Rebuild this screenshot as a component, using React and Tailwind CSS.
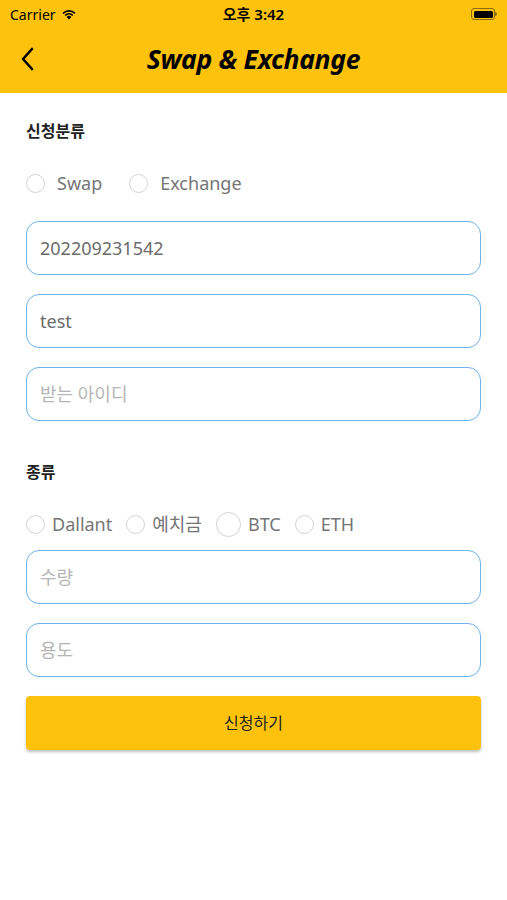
import React, { useState } from 'react'

const Radio = ({ label, checked, onClick, big, wide }) => (
  <button onClick={onClick} className={`flex items-center ${wide ? 'gap-[12px]' : 'gap-[7px]'}`}>
    <span className={`${big ? 'size-[25px]' : 'size-[19px]'} rounded-full border border-[#d4d4d4] bg-white flex items-center justify-center`}>
      {checked && <span className='size-[9px] rounded-full bg-[#fdc20c]' />}
    </span>
    <span className='text-[18px] text-[#757575]'>{label}</span>
  </button>
)

const Field = ({ value, placeholder }) => (
  <input
    defaultValue={value}
    placeholder={placeholder}
    className='w-full h-[54px] rounded-[13px] border-[1.5px] border-[#6db3ee] px-[13px] text-[18px] text-[#6b6b6b] placeholder:text-[#b5b5b5] outline-none'
  />
)

const App = () => {
  const [kind, setKind] = useState('')
  const [coin, setCoin] = useState('')

  return (
    <main className='w-[507px] h-[900px] bg-white' style={{ fontFamily: '"Noto Sans", "Noto Sans CJK KR", sans-serif' }}>
      <header className='bg-[#fdc20c] h-[93px]'>
        <div className='h-[28px] flex items-center justify-between px-[10px]'>
          <div className='flex items-center gap-[5px] w-[120px]'>
            <span className='text-[14px] text-black'>Carrier</span>
            <svg width='16' height='12' viewBox='0 0 16 12'>
              <path d='M8 11.5 L5.6 8.9 A3.4 3.4 0 0 1 10.4 8.9 Z' fill='black' />
              <path d='M3.6 6.9 A6.3 6.3 0 0 1 12.4 6.9 L11.3 8 A4.8 4.8 0 0 0 4.7 8 Z' fill='black' />
              <path d='M1.5 4.8 A9.2 9.2 0 0 1 14.5 4.8 L13.4 5.9 A7.7 7.7 0 0 0 2.6 5.9 Z' fill='black' />
            </svg>
          </div>
          <span className='text-[15px] font-semibold text-black'>오후 3:42</span>
          <div className='w-[120px] flex justify-end'>
            <div className='flex items-center'>
              <div className='w-[24px] h-[12px] rounded-[3px] border border-[#8a6d10] p-[1.5px]'>
                <div className='w-full h-full rounded-[1.5px] bg-black' />
              </div>
              <div className='w-[1.5px] h-[4px] bg-[#8a6d10] rounded-r' />
            </div>
          </div>
        </div>
        <div className='relative h-[65px] flex items-center justify-center'>
          <button className='absolute left-[18px] top-[18px]'>
            <svg width='18' height='26' viewBox='0 0 18 26' fill='none' stroke='black' strokeWidth='2.6' strokeLinecap='round' strokeLinejoin='round'>
              <path d='M14 3 L5 13 L14 23' />
            </svg>
          </button>
          <h1 className='text-[26.5px] font-bold italic text-black tracking-[-0.3px] -mt-[1px]'>Swap &amp; Exchange</h1>
        </div>
      </header>

      <section className='px-[26px] pt-[26px]'>
        <h2 className='text-[16px] font-bold text-[#222] leading-[24px]'>신청분류</h2>
        <div className='flex gap-[27px] mt-[28px] h-[24px] items-center'>
          <Radio wide label='Swap' checked={kind === 'swap'} onClick={() => setKind('swap')} />
          <Radio wide label='Exchange' checked={kind === 'ex'} onClick={() => setKind('ex')} />
        </div>
        <div className='flex flex-col gap-[19px] mt-[26px]'>
          <Field value='202209231542' />
          <Field value='test' />
          <Field placeholder='받는 아이디' />
        </div>

        <h2 className='text-[16px] font-bold text-[#222] leading-[24px] mt-[39px]'>종류</h2>
        <div className='flex gap-[14px] mt-[27px] h-[26px] items-center'>
          <Radio label='Dallant' checked={coin === 'd'} onClick={() => setCoin('d')} />
          <Radio label='예치금' checked={coin === 'k'} onClick={() => setCoin('k')} />
          <Radio label='BTC' big checked={coin === 'b'} onClick={() => setCoin('b')} />
          <Radio label='ETH' checked={coin === 'e'} onClick={() => setCoin('e')} />
        </div>
        <div className='flex flex-col gap-[19px] mt-[13px]'>
          <Field placeholder='수량' />
          <Field placeholder='용도' />
        </div>
        <button className='mt-[19px] w-full h-[54px] rounded-[4px] bg-[#fdc20c] shadow-[0_2px_3px_rgba(0,0,0,0.25)] text-[16px] text-[#222]'>
          신청하기
        </button>
      </section>
    </main>
  )
}

export default App
